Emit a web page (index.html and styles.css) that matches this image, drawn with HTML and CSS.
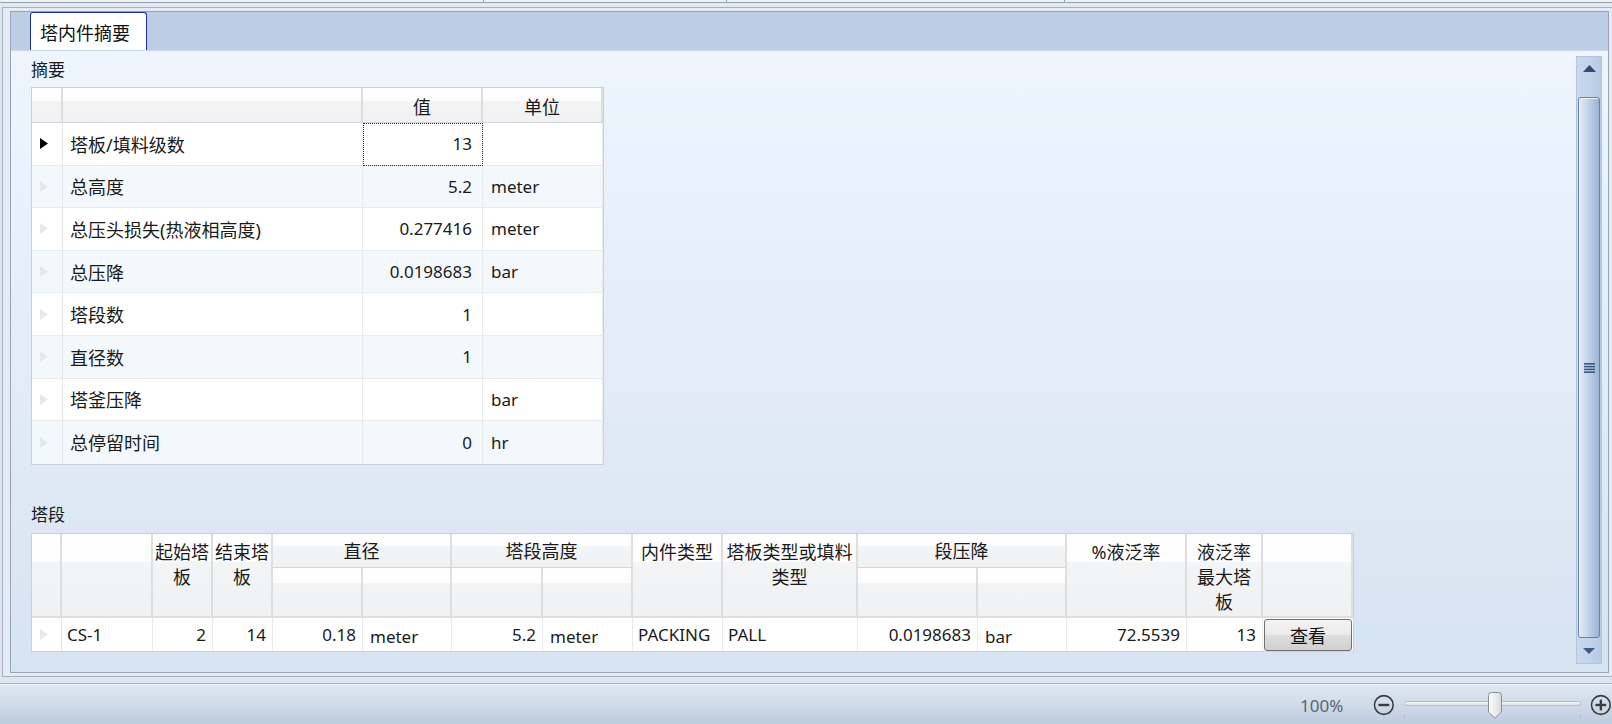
FILE: index.html
```html
<!DOCTYPE html>
<html lang="zh-CN">
<head>
    <meta charset="UTF-8">
    <meta name="viewport" content="width=device-width, initial-scale=1.0">
    <title>塔内件摘要</title>
    <link rel="stylesheet" href="styles.css">
</head>
<body>
    <div class="top-strip">
        <div class="strip-seg seg-a"></div>
        <div class="strip-seg seg-b"></div>
        <div class="strip-seg seg-c"></div>
    </div>

    <div class="frame">
        <div class="panel">
            <div class="tab-bar">
                <div class="tab active">塔内件摘要</div>
            </div>

            <div class="content">
                <div class="main">
                    <div class="section-title">摘要</div>
                    <table class="grid summary">
                        <colgroup>
                            <col class="c-sel"><col class="c-name"><col class="c-val"><col class="c-unit">
                        </colgroup>
                        <thead>
                            <tr>
                                <th></th><th></th><th>值</th><th>单位</th>
                            </tr>
                        </thead>
                        <tbody>
                            <tr>
                                <td class="sel"><svg class="row-arrow current" width="8" height="11" viewBox="0 0 8 11"><path d="M0 0L8 5.5L0 11Z"/></svg></td>
                                <td class="name">塔板/填料级数</td><td class="num focus">13</td><td></td>
                            </tr>
                            <tr>
                                <td class="sel"><svg class="row-arrow" width="8" height="11" viewBox="0 0 8 11"><path d="M0 0L8 5.5L0 11Z"/></svg></td>
                                <td class="name">总高度</td><td class="num">5.2</td><td>meter</td>
                            </tr>
                            <tr>
                                <td class="sel"><svg class="row-arrow" width="8" height="11" viewBox="0 0 8 11"><path d="M0 0L8 5.5L0 11Z"/></svg></td>
                                <td class="name">总压头损失(热液相高度)</td><td class="num">0.277416</td><td>meter</td>
                            </tr>
                            <tr>
                                <td class="sel"><svg class="row-arrow" width="8" height="11" viewBox="0 0 8 11"><path d="M0 0L8 5.5L0 11Z"/></svg></td>
                                <td class="name">总压降</td><td class="num">0.0198683</td><td>bar</td>
                            </tr>
                            <tr>
                                <td class="sel"><svg class="row-arrow" width="8" height="11" viewBox="0 0 8 11"><path d="M0 0L8 5.5L0 11Z"/></svg></td>
                                <td class="name">塔段数</td><td class="num">1</td><td></td>
                            </tr>
                            <tr>
                                <td class="sel"><svg class="row-arrow" width="8" height="11" viewBox="0 0 8 11"><path d="M0 0L8 5.5L0 11Z"/></svg></td>
                                <td class="name">直径数</td><td class="num">1</td><td></td>
                            </tr>
                            <tr>
                                <td class="sel"><svg class="row-arrow" width="8" height="11" viewBox="0 0 8 11"><path d="M0 0L8 5.5L0 11Z"/></svg></td>
                                <td class="name">塔釜压降</td><td class="num"></td><td>bar</td>
                            </tr>
                            <tr>
                                <td class="sel"><svg class="row-arrow" width="8" height="11" viewBox="0 0 8 11"><path d="M0 0L8 5.5L0 11Z"/></svg></td>
                                <td class="name">总停留时间</td><td class="num">0</td><td>hr</td>
                            </tr>
                        </tbody>
                    </table>

                    <div class="section-title seg-title">塔段</div>
                    <table class="grid sections">
                        <colgroup>
                            <col class="s-sel"><col class="s-name"><col class="s-start"><col class="s-end">
                            <col class="s-d1"><col class="s-d2"><col class="s-h1"><col class="s-h2">
                            <col class="s-int"><col class="s-tray"><col class="s-p1"><col class="s-p2">
                            <col class="s-flood"><col class="s-max"><col class="s-btn">
                        </colgroup>
                        <thead>
                            <tr class="group-row">
                                <th rowspan="2" class="tall"></th>
                                <th rowspan="2" class="tall"></th>
                                <th rowspan="2" class="tall">起始塔<br>板</th>
                                <th rowspan="2" class="tall">结束塔<br>板</th>
                                <th colspan="2" class="group">直径</th>
                                <th colspan="2" class="group">塔段高度</th>
                                <th rowspan="2" class="tall">内件类型</th>
                                <th rowspan="2" class="tall">塔板类型或填料<br>类型</th>
                                <th colspan="2" class="group">段压降</th>
                                <th rowspan="2" class="tall">%液泛率</th>
                                <th rowspan="2" class="tall">液泛率<br>最大塔<br>板</th>
                                <th rowspan="2" class="tall"></th>
                            </tr>
                            <tr class="sub-row">
                                <th class="sub"></th><th class="sub"></th>
                                <th class="sub"></th><th class="sub"></th>
                                <th class="sub"></th><th class="sub"></th>
                            </tr>
                        </thead>
                        <tbody>
                            <tr>
                                <td class="sel"><svg class="row-arrow" width="8" height="11" viewBox="0 0 8 11"><path d="M0 0L8 5.5L0 11Z"/></svg></td>
                                <td>CS-1</td>
                                <td class="num">2</td>
                                <td class="num">14</td>
                                <td class="num">0.18</td>
                                <td class="unit">meter</td>
                                <td class="num">5.2</td>
                                <td class="unit">meter</td>
                                <td>PACKING</td>
                                <td>PALL</td>
                                <td class="num">0.0198683</td>
                                <td class="unit">bar</td>
                                <td class="num">72.5539</td>
                                <td class="num">13</td>
                                <td class="btn-cell"><button class="view-btn">查看</button></td>
                            </tr>
                        </tbody>
                    </table>
                </div>

                <div class="vscroll">
                    <div class="scroll-up">
                        <svg width="13" height="7" viewBox="0 0 13 7"><path d="M6.5 0L13 7H0Z"/></svg>
                    </div>
                    <div class="scroll-thumb">
                        <svg width="11" height="10" viewBox="0 0 11 10">
                            <rect x="0" y="0" width="11" height="1.6"/>
                            <rect x="0" y="2.8" width="11" height="1.6"/>
                            <rect x="0" y="5.6" width="11" height="1.6"/>
                            <rect x="0" y="8.4" width="11" height="1.6"/>
                        </svg>
                    </div>
                    <div class="scroll-down">
                        <svg width="12" height="6" viewBox="0 0 12 6"><path d="M0 0H12L6 6Z"/></svg>
                    </div>
                </div>
            </div>
        </div>
    </div>

    <div class="status-bar">
        <span class="zoom-label">100%</span>
        <svg class="zoom-icon" width="22" height="22" viewBox="0 0 22 22">
            <circle cx="11" cy="11" r="9.5" fill="none" stroke="#3c3c3c" stroke-width="1.6"/>
            <rect x="5.5" y="9.8" width="11" height="2.4" fill="#3c3c3c"/>
        </svg>
        <div class="zoom-slider">
            <div class="slider-track"></div>
            <div class="slider-tick tick-left"></div>
            <div class="slider-tick tick-right"></div>
            <svg class="slider-thumb" width="16" height="27" viewBox="0 0 16 27">
                <defs>
                    <linearGradient id="thumbFill" x1="0" y1="0" x2="1" y2="0">
                        <stop offset="0" stop-color="#ffffff"/>
                        <stop offset="1" stop-color="#d6d9dd"/>
                    </linearGradient>
                </defs>
                <path d="M1.5 3.5Q1.5 0.5 4.5 0.5H11.5Q14.5 0.5 14.5 3.5V20L8 26.2L1.5 20Z" fill="url(#thumbFill)" stroke="#8b8f94"/>
            </svg>
        </div>
        <svg class="zoom-icon plus" width="22" height="22" viewBox="0 0 22 22">
            <circle cx="11" cy="11" r="9.5" fill="none" stroke="#3c3c3c" stroke-width="1.6"/>
            <rect x="5.5" y="9.8" width="11" height="2.4" fill="#3c3c3c"/>
            <rect x="9.8" y="5.5" width="2.4" height="11" fill="#3c3c3c"/>
        </svg>
    </div>
</body>
</html>
```

FILE: styles.css
```css
* {
    box-sizing: border-box;
}
html, body {
    margin: 0;
    padding: 0;
}
body {
    width: 1612px;
    height: 724px;
    overflow: hidden;
    background: #dce5f0;
    font-family: "Noto Sans", "Noto Sans CJK SC", sans-serif;
    font-size: 17px;
    color: #1a1a1a;
}

/* strip left over from the window above */
.top-strip {
    display: flex;
    height: 7px;
    background: linear-gradient(#edf1f6 0, #edf1f6 2px, #98a3b1 2px, #98a3b1 3px, #e2e9f2 3px);
}
.strip-seg {
    height: 3px;
    border-right: 1px solid #98a3b1;
}
.seg-a { width: 484px; }
.seg-b { width: 243px; }
.seg-c { width: 338px; }

.frame {
    margin-left: 2px;
    width: 1610px;
    border: 1px solid #a6b1be;
    border-right: none;
    padding: 3px 2px 3px 7px;
    background: #e4ebf4;
}
.panel {
    width: 1599px;
    height: 662px;
    border: 1px solid #97a3b1;
    display: flex;
    flex-direction: column;
    background: #bccde5;
}

.tab-bar {
    height: 38px;
    display: flex;
    padding-left: 19px;
}
.tab {
    width: 117px;
    height: 38px;
    padding: 0 9px;
    line-height: 40px;
    font-size: 18px;
    color: #111;
    background: #fff;
    border: 1px solid #1f2f98;
    border-bottom: none;
    border-radius: 3px 3px 0 0;
    white-space: nowrap;
}

.content {
    flex: 1;
    display: flex;
    background: linear-gradient(#eef5fd 0%, #e3ecf7 50%, #d6e3f1 100%);
    border-top: 1px solid #c9d7ea;
}
.main {
    flex: 1;
    padding: 8px 0 0 20px;
}
.section-title {
    height: 22px;
    line-height: 22px;
    margin-bottom: 6px;
}
.seg-title {
    margin-top: 39px;
    margin-bottom: 7px;
}

/* data grids */
.grid {
    border-collapse: separate;
    border-spacing: 0;
    table-layout: fixed;
    background: #fff;
    border: 1px solid #ccd0d5;
}
.grid th {
    font-weight: normal;
    font-size: 18px;
    padding: 0 2px;
    background: linear-gradient(#ffffff 0%, #fdfdfd 37%, #f3f4f5 37%, #f0f1f2 100%);
    border-right: 2px solid #dcdee0;
    border-bottom: 1px solid #d3d5d8;
    white-space: nowrap;
}
.grid td {
    padding: 0 8px;
    border-right: 1px solid #e8eaec;
    border-bottom: 1px solid #e8eaec;
    white-space: nowrap;
}
.grid td.name {
    font-size: 18px;
    padding-left: 7px;
}
.grid tbody tr:nth-child(even) td {
    background: #f3f8fc;
}
.grid tbody tr:last-child td {
    border-bottom: none;
}
.grid td.sel {
    padding: 0 0 0 8px;
    border-right: 1px solid #e2e4e6;
}
.grid td.num {
    text-align: right;
    padding-right: 10px;
}
.row-arrow {
    display: block;
    fill: #e6e9ec;
}
.row-arrow.current {
    fill: #000;
}
.focus {
    outline: 1px dotted #333;
    outline-offset: -1px;
}

.summary {
    width: 571px;
}
.summary thead tr {
    height: 35px;
}
.summary tbody tr {
    height: 42.6px;
}
.summary th {
    padding-top: 2px;
}
.c-sel { width: 31px; }
.c-name { width: 300px; }
.c-val { width: 120px; }
.c-unit { width: 120px; }

.sections {
    width: 1321px;
}
.sections .group-row {
    height: 34px;
}
.sections .sub-row {
    height: 50px;
}
.sections tbody tr {
    height: 33px;
}
.sections th.tall {
    vertical-align: top;
    padding-top: 6px;
    line-height: 25px;
    background: linear-gradient(#ffffff 0%, #fdfdfd 34%, #f3f4f5 34%, #f0f1f2 100%);
    border-bottom: 2px solid #dcdee0;
}
.sections th.group {
    padding-top: 0;
}
.sections th.sub {
    background: linear-gradient(#ffffff 0%, #fdfdfd 32%, #f3f4f5 32%, #f0f1f2 100%);
    border-bottom: 2px solid #dcdee0;
}
.sections td {
    padding: 0 5px;
}
.sections td.num {
    padding-right: 6px;
}
.sections td.unit {
    padding-top: 4px;
    padding-left: 7px;
}
.sections td.btn-cell {
    padding: 1px 1px 0 1px;
    border-right: none;
}
.s-sel { width: 30px; }
.s-name { width: 91px; }
.s-start { width: 60px; }
.s-end { width: 60px; }
.s-d1 { width: 90px; }
.s-d2 { width: 89px; }
.s-h1 { width: 91px; }
.s-h2 { width: 90px; }
.s-int { width: 90px; }
.s-tray { width: 135px; }
.s-p1 { width: 120px; }
.s-p2 { width: 89px; }
.s-flood { width: 120px; }
.s-max { width: 76px; }
.s-btn { width: 90px; }

.view-btn {
    display: block;
    width: 100%;
    height: 32px;
    font-family: inherit;
    font-size: 18px;
    color: #111;
    border: 1px solid #707070;
    border-radius: 3px;
    background: linear-gradient(#f3f3f3 0%, #ebebeb 48%, #dddddd 52%, #cfcfcf 100%);
    padding: 0;
}

/* vertical scrollbar */
.vscroll {
    width: 26px;
    margin: 5px 6px 8px 0;
    display: flex;
    flex-direction: column;
    background: linear-gradient(90deg, #cad9ee 0%, #c1d2ea 55%, #b7cae4 100%);
    border: 1px solid #b3c5de;
}
.scroll-up {
    height: 40px;
    padding-top: 8px;
    display: flex;
    justify-content: center;
    align-items: flex-start;
    fill: #2f4b77;
}
.scroll-thumb {
    flex: 1;
    margin: 0 1px;
    border: 1px solid #6283b0;
    border-radius: 3px;
    background: linear-gradient(90deg, #e2eaf6 0%, #c9d7ec 40%, #a9bedd 80%, #9bb2d4 100%);
    box-shadow: inset 1px 1px 0 #f2f6fc;
    display: flex;
    justify-content: center;
    align-items: center;
    fill: #3b5a86;
}
.scroll-down {
    height: 25px;
    display: flex;
    justify-content: center;
    align-items: center;
    fill: #3d5b88;
}

/* status bar */
.status-bar {
    margin-top: 6px;
    height: 41px;
    border-top: 1px solid #a9b6c7;
    box-shadow: inset 0 1px 0 #eef3f9;
    background: linear-gradient(#dfe8f3 0%, #cfdbe9 50%, #bccbdf 100%);
    display: flex;
    align-items: center;
    padding-top: 2px;
}
.zoom-label {
    margin-left: 1300px;
    width: 48px;
    color: #5c646e;
    font-size: 17px;
}
.zoom-icon {
    margin-left: 26px;
}
.zoom-icon.plus {
    margin-left: 0;
}
.zoom-slider {
    position: relative;
    width: 180px;
    height: 27px;
    margin-left: 9px;
    margin-right: 9px;
}
.slider-track {
    position: absolute;
    left: 0;
    right: 0;
    top: 9px;
    height: 5px;
    border: 1px solid #b9bec5;
    border-radius: 3px;
    background: linear-gradient(#f6f7f8, #dcdfe3);
}
.slider-tick {
    position: absolute;
    top: 23px;
    width: 1px;
    height: 4px;
    background: #b0b8c4;
}
.tick-left { left: 0; }
.tick-right { right: 0; }
.slider-thumb {
    position: absolute;
    left: 83px;
    top: 0;
}
```
